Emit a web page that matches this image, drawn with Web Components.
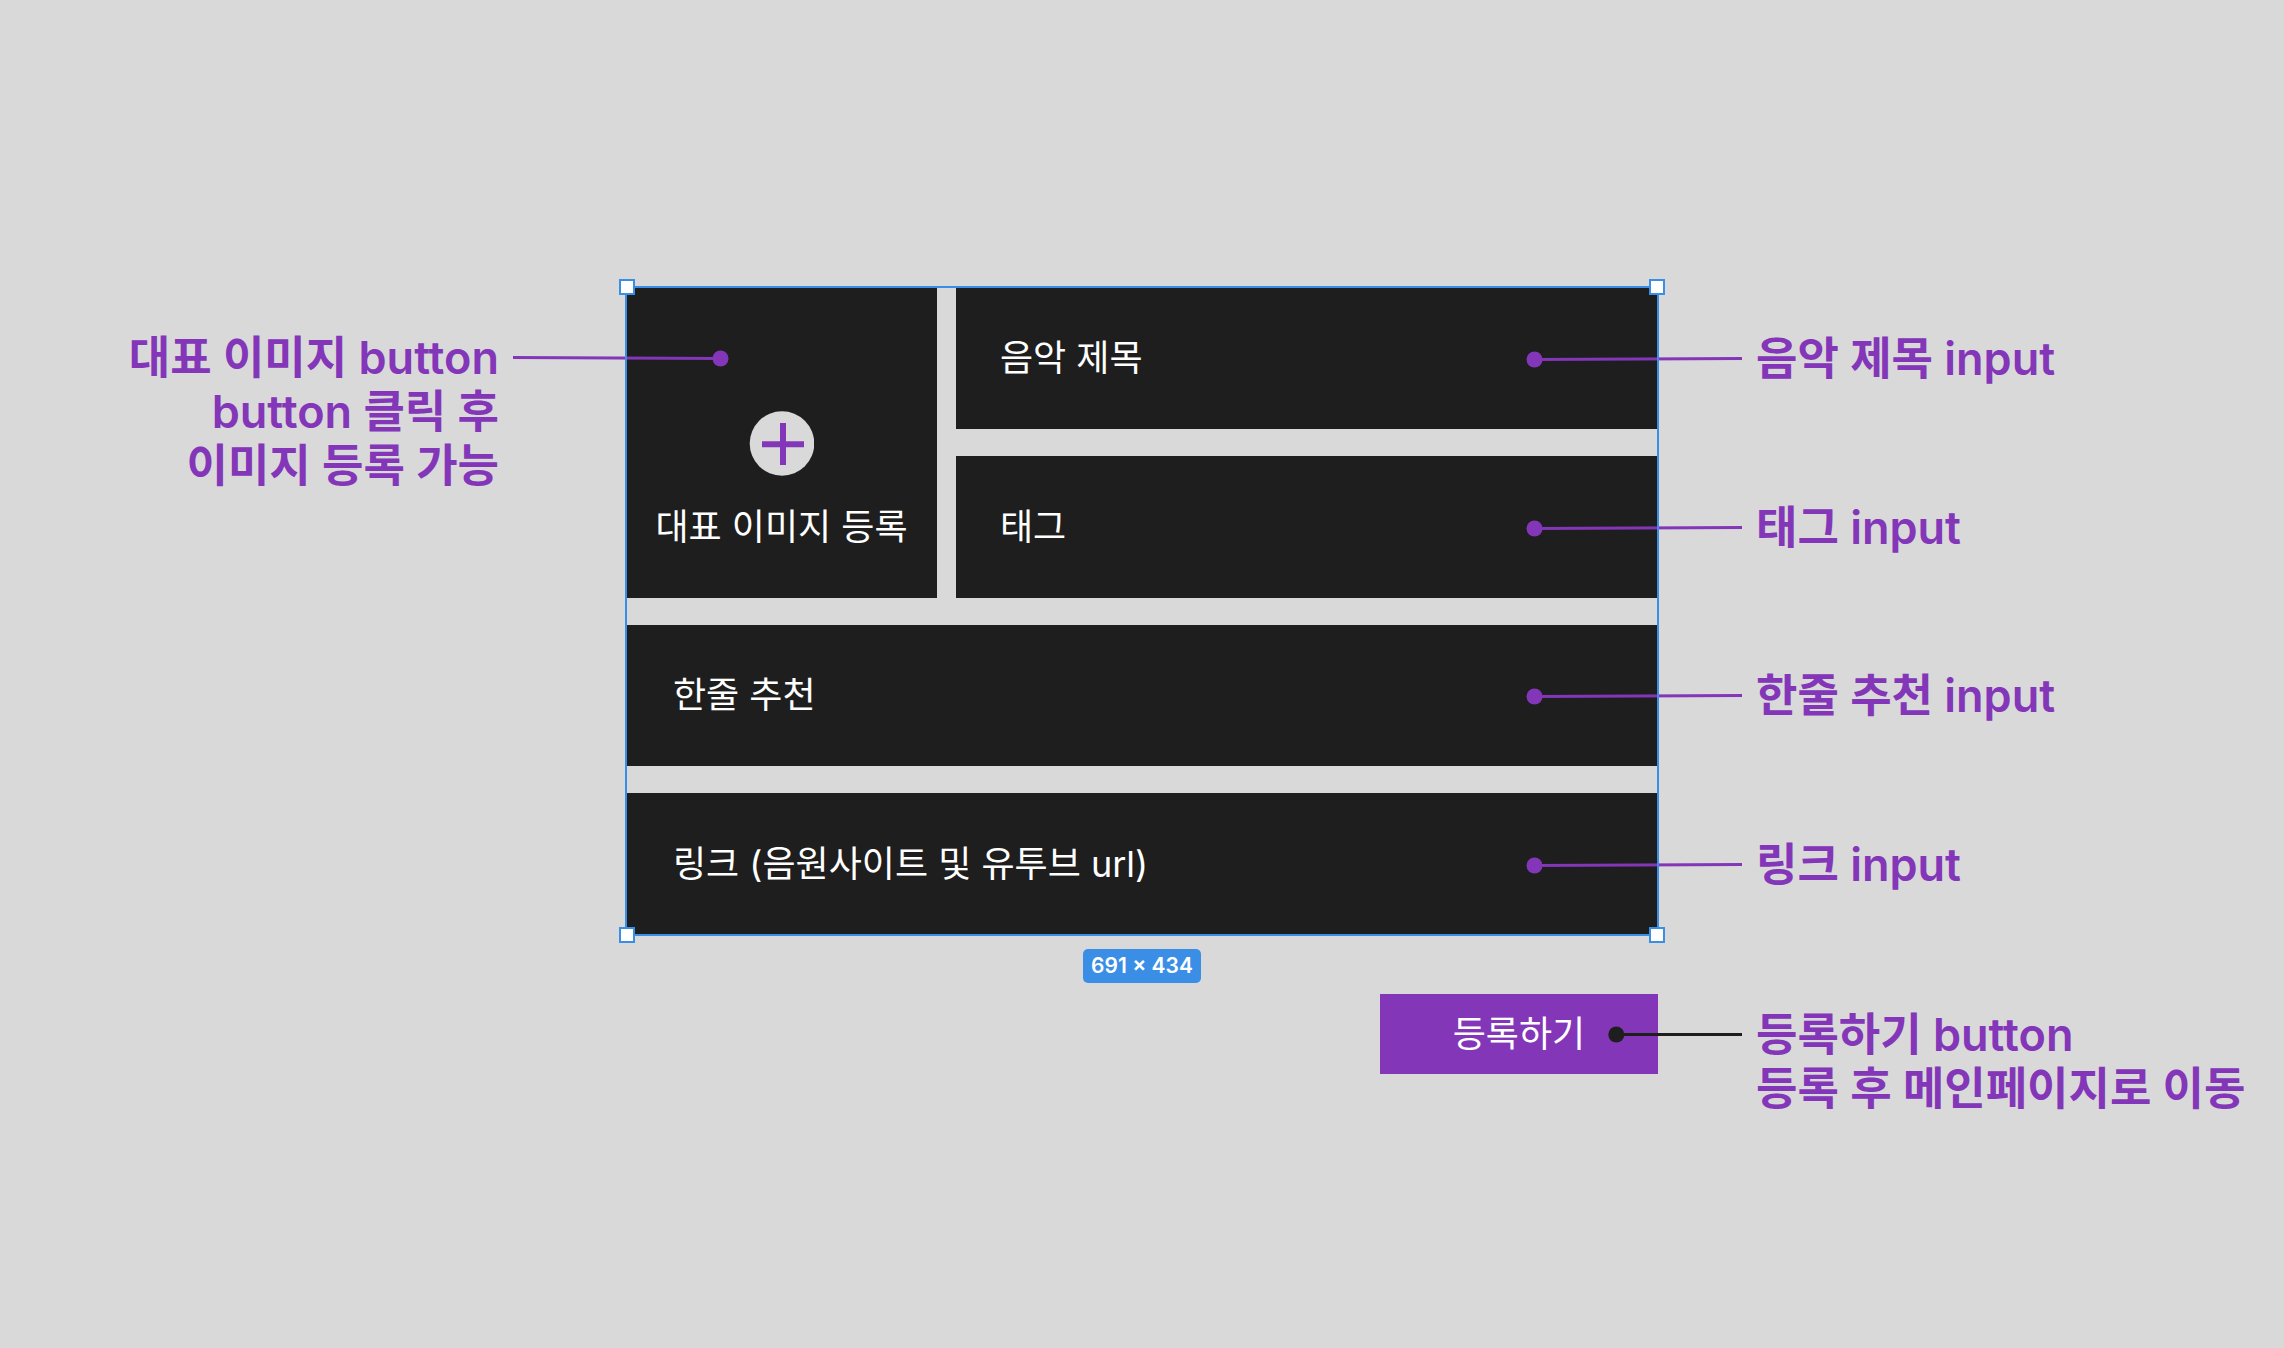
<!DOCTYPE html>
<html lang="ko">
<head>
<meta charset="utf-8">
<title>음악 등록</title>
<style>
  :root {
    --canvas: #d9d9d9;
    --tile: #1e1e1e;
    --accent: #8436b9;
    --select: #3b8ee5;
    --note-size: 45px;
    --note-line: 54px;
    --text-size: 36px;
    --text-line: 44px;
  }
  body {
    margin: 0;
    background: var(--canvas);
    font-family: Inter, "Noto Sans CJK KR", sans-serif;
    font-optical-sizing: none;
  }
</style>
</head>
<body>
<music-board>
  <image-picker label="대표 이미지 등록">대표 이미지 button<br>button 클릭 후<br>이미지 등록 가능</image-picker>
  <music-field class="half first" name="title" hint="음악 제목">음악 제목 input</music-field>
  <music-field class="half second" name="tag" hint="태그">태그 input</music-field>
  <music-field class="wide third" name="comment" hint="한줄 추천">한줄 추천 input</music-field>
  <music-field class="wide fourth" name="link" hint="링크 (음원사이트 및 유투브 url)">링크 input</music-field>
  <selection-frame></selection-frame>
  <size-badge>691 × 434</size-badge>
  <submit-row label="등록하기">등록하기 button<br>등록 후 메인페이지로 이동</submit-row>
</music-board>

<script>
const define = (name, html, ready) => {
  const template = document.createElement("template");
  template.innerHTML = html;
  customElements.define(name, class extends HTMLElement {
    constructor() {
      super();
      this.attachShadow({ mode: "open" }).append(template.content.cloneNode(true));
    }
    connectedCallback() { if (ready) ready(this, this.shadowRoot); }
  });
};

const noteStyle = `
  .callout { display: flex; gap: 14px; align-items: flex-start; position: relative; z-index: 1; }
  .callout svg { flex: none; display: block; height: var(--note-line); pointer-events: none; }
  .note { margin: 0; color: var(--accent); font-size: var(--note-size); line-height: var(--note-line);
          font-weight: 600; white-space: nowrap; }
`;

define("music-board", `
  <style>
    :host {
      display: grid;
      box-sizing: border-box;
      min-height: 100vh;
      padding-top: 287px;
      overflow: hidden;
      align-content: start;
      grid-template-columns: 1fr minmax(0, 311px) 19px minmax(0, 702px) 1fr;
      grid-template-rows: 648px auto auto;
    }
    .fields {
      display: grid;
      grid-column: 1 / -1;
      grid-template-columns: subgrid;
      grid-template-rows: repeat(4, 1fr);
      row-gap: 27px;
    }
    ::slotted(image-picker) { grid-column: 1 / 3; grid-row: 1 / 3; }
    ::slotted(.half) { grid-column: 4 / 6; }
    ::slotted(.wide) { grid-column: 2 / 6; --inset: 47px; }
    ::slotted(.first) { grid-row: 1; }
    ::slotted(.second) { grid-row: 2; }
    ::slotted(.third) { grid-row: 3; }
    ::slotted(.fourth) { grid-row: 4; }
    ::slotted(selection-frame) { grid-column: 2 / 5; grid-row: 1 / 5; }
    ::slotted(size-badge) { grid-column: 2 / 5; justify-self: center; margin: 14px 0 11px; }
    ::slotted(submit-row) { grid-column: 4 / 6; }
  </style>
  <div class="fields"><slot name="fields"></slot></div>
  <slot></slot>
`, host => {
  host.querySelectorAll("image-picker, music-field, selection-frame").forEach(el => el.slot = "fields");
});

define("music-field", `
  <style>
    ${noteStyle}
    :host { display: grid; grid-template-columns: subgrid; grid-template-rows: 100%; min-height: 0; }
    input {
      grid-column: 1 / -2;
      box-sizing: border-box; width: 100%; min-width: 0; height: 100%;
      margin: 0; border: 0; border-radius: 0; outline-offset: -4px;
      padding: 0 140px 0 var(--inset, 44px);
      background: var(--tile); color: #fff;
      font: 400 var(--text-size)/var(--text-line) Inter, "Noto Sans CJK KR", sans-serif;
      font-optical-sizing: none;
    }
    input::placeholder { color: #fff; opacity: 1; }
    .callout { grid-column: -2 / -1; align-self: center; padding-top: 2px; }
    svg { margin-left: -132px; }
  </style>
  <input id="field" type="text">
  <div class="callout">
    <svg width="216" height="54" viewBox="0 0 216 54" aria-hidden="true">
      <circle cx="8.5" cy="27.5" r="8" fill="#8436b9"/>
      <path d="M8 27.5L216 26.5" stroke="#8436b9" stroke-width="3"/>
    </svg>
    <label class="note" for="field"><slot></slot></label>
  </div>
`, (host, root) => {
  const input = root.querySelector("input");
  input.name = host.getAttribute("name");
  input.placeholder = host.getAttribute("hint");
});

define("image-picker", `
  <style>
    ${noteStyle}
    :host { display: grid; grid-template-columns: subgrid; grid-template-rows: 100%; min-height: 0; }
    .callout { justify-content: flex-end; padding-top: 44px; text-align: right; }
    .callout svg { margin-right: -103px; }
    button {
      display: flex; flex-direction: column; align-items: center; gap: 29px;
      min-width: 0; margin: 0; border: 0; padding: 124px 0 0;
      background: var(--tile); color: #fff; cursor: pointer;
      font: 400 var(--text-size)/var(--text-line) Inter, "Noto Sans CJK KR", sans-serif;
      font-optical-sizing: none;
      white-space: nowrap;
    }
    button svg { display: block; }
  </style>
  <div class="callout">
    <p class="note" id="note"><slot></slot></p>
    <svg width="216" height="54" viewBox="0 0 216 54" aria-hidden="true">
      <circle cx="207.5" cy="27.5" r="8" fill="#8436b9"/>
      <path d="M0 26.5L208 27.5" stroke="#8436b9" stroke-width="3"/>
    </svg>
  </div>
  <button type="button" aria-describedby="note">
    <svg width="65" height="65" viewBox="0 0 65 65" aria-hidden="true">
      <circle cx="33" cy="32.5" r="32.3" fill="#d9d9d9"/>
      <path d="M13 33.3H55M34 12V54" stroke="#8436b9" stroke-width="6"/>
    </svg>
    <span></span>
  </button>
`, (host, root) => { root.querySelector("span").textContent = host.getAttribute("label"); });

define("selection-frame", `
  <style>
    :host { display: block; position: relative; z-index: 2; pointer-events: none; }
    .line { position: absolute; inset: -1px; border: 2px solid var(--select); }
    .handle { position: absolute; box-sizing: border-box; width: 16px; height: 16px;
              background: #fff; border: 2px solid var(--select); }
    .t { top: -8px; } .b { bottom: -8px; } .l { left: -7px; } .r { right: -7px; }
  </style>
  <div class="line"></div>
  <i class="handle t l"></i><i class="handle t r"></i>
  <i class="handle b l"></i><i class="handle b r"></i>
`);

define("size-badge", `
  <style>
    :host { display: block; padding: 0 8px; border-radius: 5px; background: var(--select); color: #fff;
            font-size: 21px; line-height: 34px; font-weight: 600; white-space: nowrap; }
  </style>
  <slot></slot>
`);

define("submit-row", `
  <style>
    ${noteStyle}
    :host { display: grid; grid-template-columns: subgrid; }
    button {
      grid-column: 1;
      justify-self: end; width: 278px; height: 80px; margin: 0; border: 0; padding: 0;
      background: var(--accent); color: #fff; cursor: pointer;
      font: 400 var(--text-size)/var(--text-line) Inter, "Noto Sans CJK KR", sans-serif;
    }
    .callout { padding-top: 14px; }
    svg { margin-left: -50px; }
  </style>
  <button type="submit" aria-describedby="note"></button>
  <div class="callout">
    <svg width="134" height="54" viewBox="0 0 134 54" aria-hidden="true">
      <circle cx="8.3" cy="26.5" r="8" fill="#1e1e1e"/>
      <path d="M8 26.5H134" stroke="#1e1e1e" stroke-width="3"/>
    </svg>
    <p class="note" id="note"><slot></slot></p>
  </div>
`, (host, root) => { root.querySelector("button").textContent = host.getAttribute("label"); });
</script>
</body>
</html>
